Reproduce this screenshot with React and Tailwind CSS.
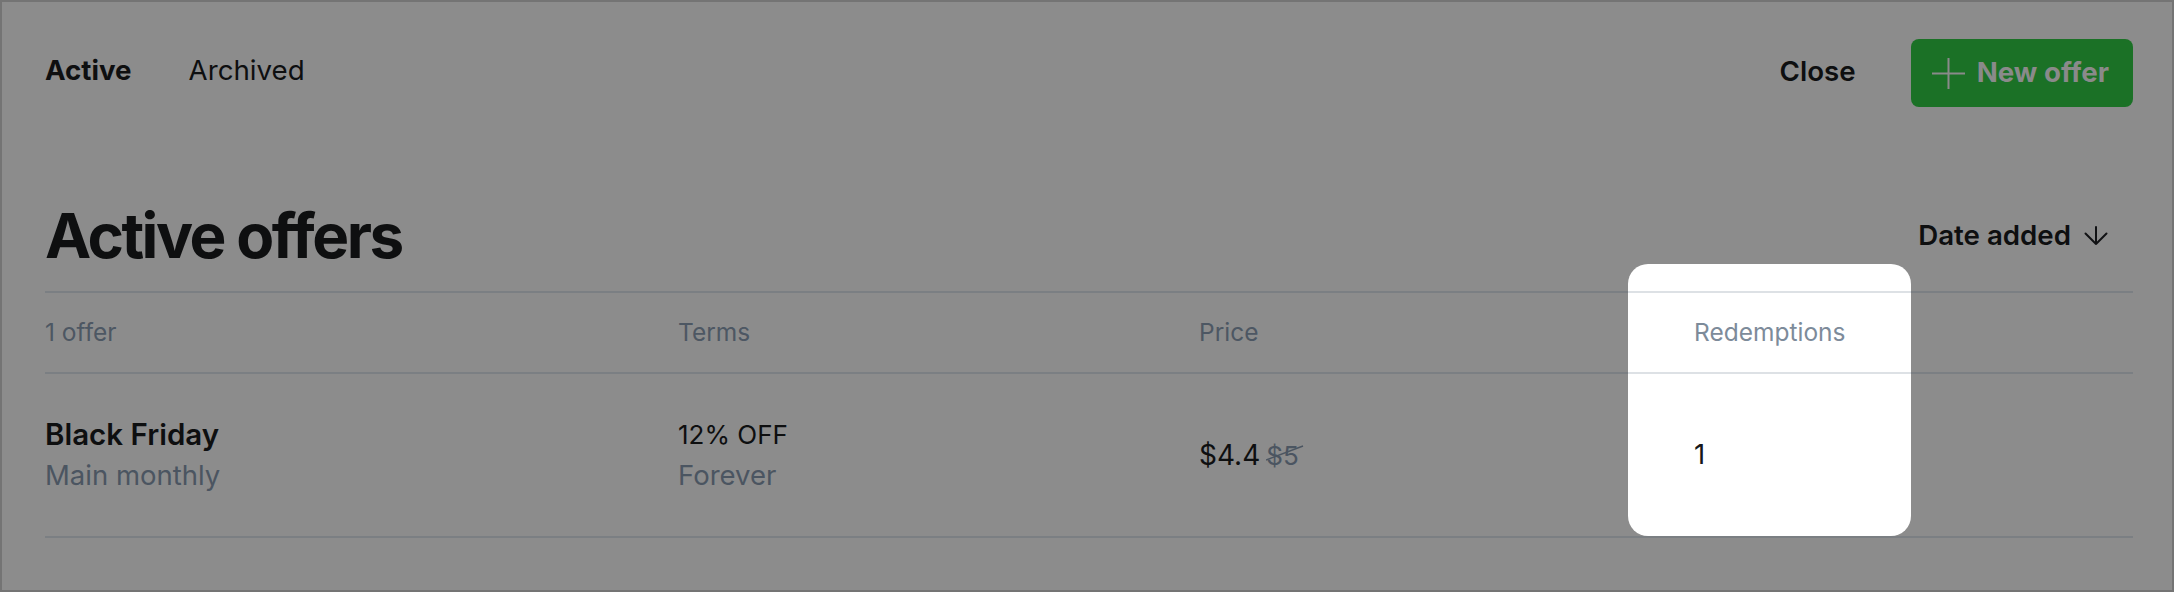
import React from 'react';

const PlusIcon = () => (
  <svg width="33" height="31" viewBox="0 0 33 31" fill="none" stroke="#8a8a8a" strokeWidth="2">
    <path d="M16.5 0V31M0 15.5H33" />
  </svg>
);

const SortArrow = () => (
  <svg width="24" height="20" viewBox="0 0 24 20" fill="none" stroke="#111214" strokeWidth="2" strokeLinecap="round" strokeLinejoin="round">
    <path d="M12 1V18M1.5 7.5L12 18L22.5 7.5" />
  </svg>
);

const App = () => {
  return (
    <div className="h-[592px] w-full overflow-hidden border-2 border-[#747474] bg-[#8c8c8c] font-['Inter',sans-serif] text-[#0e0f10]">
      <div className="pl-[43px] pr-[39px] pt-[37px]">
        {/* TOP BAR */}
        <div className="flex h-[68px] items-center justify-between">
          <div className="flex items-center gap-[57px] pb-[5px] text-[27.7px]">
            <span className="font-bold">Active</span>
            <span>Archived</span>
          </div>
          <div className="flex items-center gap-[55px]">
            <span className="pb-[3px] text-[27.7px] font-semibold">Close</span>
            <button className="flex h-[68px] items-center gap-[12px] rounded-[8px] bg-[#1b7126] pl-[21px] pr-[24px] text-[27.7px] font-bold text-[#8a8a8a]">
              <PlusIcon />
              New offer
            </button>
          </div>
        </div>

        {/* HEADING */}
        <div className="mt-[97px] flex h-[64px] items-center justify-between">
          <h1 className="text-[62px] font-bold leading-none tracking-[-0.04em]">Active offers</h1>
          <div className="flex items-center gap-[13px] pr-[25px] text-[27.7px] font-semibold">
            Date added
            <SortArrow />
          </div>
        </div>

        {/* TABLE */}
        <div className="relative mt-[23px]">
          <div className="absolute left-[1583px] top-[-27px] h-[272px] w-[283px] rounded-[20px] bg-white"></div>
          <div className="relative">
            <div className="grid h-[83px] grid-cols-[633px_521px_495px_1fr] items-center border-y-2 border-[rgba(25,52,79,0.15)] text-[24.5px] text-[#4d5763]">
              <div>1 offer</div>
              <div>Terms</div>
              <div>Price</div>
              <div className="text-[#7d8b9a]">Redemptions</div>
            </div>
            <div className="grid h-[164px] grid-cols-[633px_521px_495px_1fr] items-center border-b-2 border-[rgba(25,52,79,0.15)] text-[27.5px]">
              <div className="leading-[41px]">
                <div className="text-[29.5px] font-semibold">Black Friday</div>
                <div className="text-[#4b5561]">Main monthly</div>
              </div>
              <div className="leading-[41px]">
                <div className="text-[26px]">12% OFF</div>
                <div className="text-[#4b5561]">Forever</div>
              </div>
              <div className="flex items-baseline gap-[6px]">
                <span className="text-[28px]">$4.4</span>
                <span className="relative text-[26px] text-[#4b5561]">
                  $5
                  <svg className="absolute left-0 top-[7px]" width="38" height="20" viewBox="0 0 38 20" fill="none" stroke="#4b5561" strokeWidth="1.5">
                    <path d="M0 17L37 3" />
                  </svg>
                </span>
              </div>
              <div className="text-[#15171a]">1</div>
            </div>
          </div>
        </div>
      </div>
    </div>
  );
};

export default App;
